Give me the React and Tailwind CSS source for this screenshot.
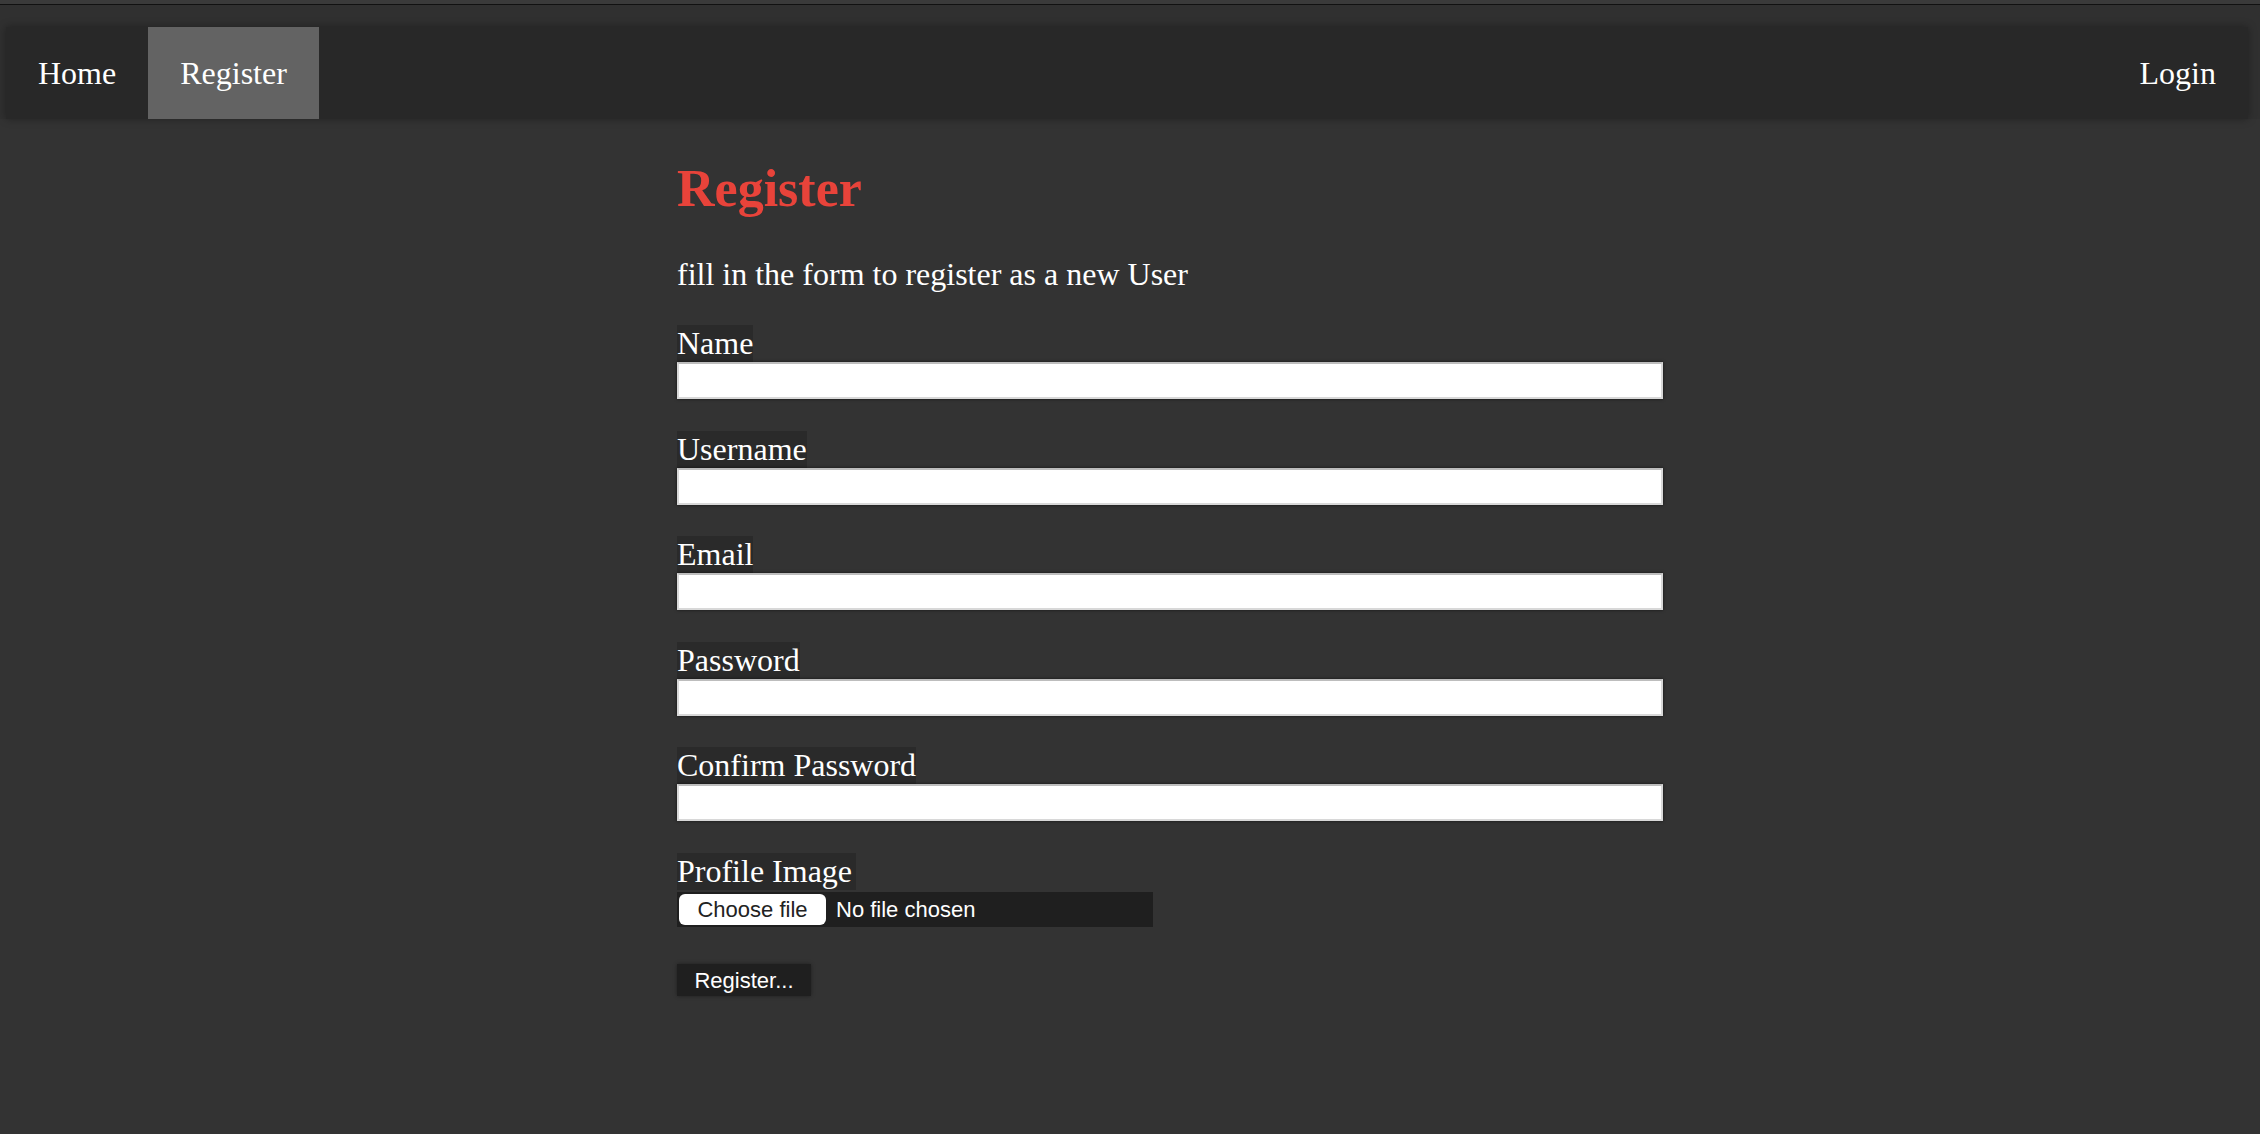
const FIELDS = [
  { label: 'Name', type: 'text' },
  { label: 'Username', type: 'text' },
  { label: 'Email', type: 'email' },
  { label: 'Password', type: 'password' },
  { label: 'Confirm Password', type: 'password' },
];

function NavLink({ children, active }) {
  return (
    <a
      href="#"
      className={
        active
          ? 'flex items-center px-8 h-full bg-[#636363] text-white'
          : 'flex items-center px-8 h-full text-white'
      }
    >
      {children}
    </a>
  );
}

function Field({ label, type }) {
  return (
    <div className="flex flex-col mb-[31.5px]">
      <label className="w-fit bg-[#2a2a2a] leading-[37px] h-[37px]">{label}</label>
      <input
        type={type}
        className="h-[37px] w-full bg-white border-2 border-[#d8d8d8] border-t-[#bdbdbd] shadow-[0_0_3px_rgba(0,0,0,0.6)] outline-none"
      />
    </div>
  );
}

export default function App() {
  return (
    <div
      className="min-h-[1134px] bg-[#333333] text-white text-[32px]"
      style={{ fontFamily: '"Liberation Serif", "Times New Roman", serif' }}
    >
      <div className="h-[5px] bg-[#3a3a3a] border-b border-[#111]" />
      <div className="pt-[22px] pl-[6px] pr-[12px] bg-[#303030]">
        <nav className="flex items-center justify-between h-[92px] bg-[#282828] shadow-[0_0_8px_rgba(0,0,0,0.35)]">
          <div className="flex h-full">
            <NavLink>Home</NavLink>
            <NavLink active>Register</NavLink>
          </div>
          <div className="flex h-full">
            <NavLink>Login</NavLink>
          </div>
        </nav>
      </div>

      <main className="ml-[677px] w-[986px] pt-[40px] pb-20">
        <h1 className="text-[52px] font-bold leading-[60px] text-[#e8433a]">Register</h1>
        <p className="mt-[37px] leading-[37px]">fill in the form to register as a new User</p>

        <form className="mt-[32px]" onSubmit={(e) => e.preventDefault()}>
          {FIELDS.map((f) => (
            <Field key={f.label} {...f} />
          ))}

          <div className="flex flex-col">
            <label className="w-fit bg-[#2a2a2a] leading-[37px] h-[37px] pr-1">Profile Image</label>
            <div
              className="mt-[2px] flex items-center w-[476px] h-[35px] bg-[#1f1f1f] text-[22px] pl-[2px]"
              style={{ fontFamily: '"Liberation Sans", Arial, sans-serif' }}
            >
              <span className="flex items-center justify-center w-[147px] h-[31px] bg-white text-[#222] rounded-[6px]">
                Choose file
              </span>
              <span className="ml-[10px] text-white">No file chosen</span>
            </div>
          </div>

          <button
            type="submit"
            className="mt-[37px] h-[32px] w-[134px] bg-[#1f1f1f] text-white text-[22px] shadow-[0_0_4px_rgba(0,0,0,0.4)]"
            style={{ fontFamily: '"Liberation Sans", Arial, sans-serif' }}
          >
            Register...
          </button>
        </form>
      </main>
    </div>
  );
}
